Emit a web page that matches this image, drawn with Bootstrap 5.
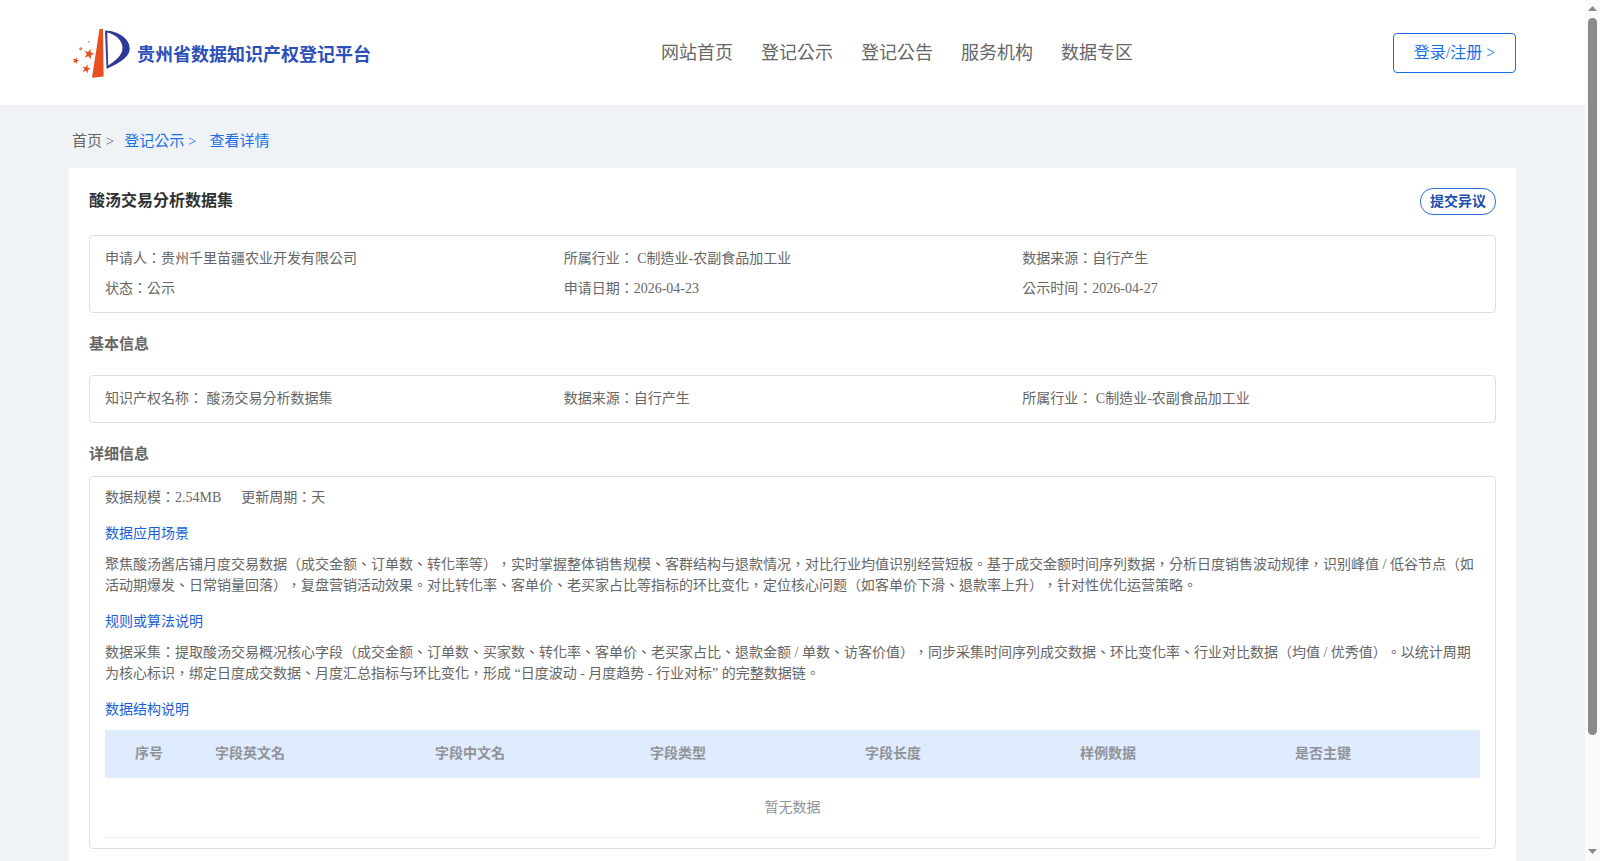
<!DOCTYPE html>
<html lang="zh-TW">
<head>
<meta charset="utf-8">
<link rel="stylesheet" href="https://cdn.jsdelivr.net/npm/bootstrap@5.3.0/dist/css/bootstrap.min.css">
<style>
html,body{background:#eff3f6;}
body{font-family:"Liberation Serif","Noto Sans CJK TC",serif;font-size:14px;color:#666;line-height:21px;text-spacing-trim:space-all;}
.page-scroll{flex:1 1 0;min-width:0;overflow-y:auto;}
.bar-rail{width:15px;flex:none;background:#fafafa;padding:6px 3px 7px;}
.bar-arrow{display:block;width:9px;height:5px;flex:none;}
.bar-thumb{display:block;height:717px;flex:none;margin-top:7px;background:#8a8a8a;border-radius:5px;}
.site-head{height:105px;background:#fff;padding:0 69px 0 72px;}
.brand-name{font-family:"Liberation Sans","Noto Sans CJK TC",sans-serif;font-size:18px;font-weight:700;color:#2c50ba;margin:6px 0 0 7px;}
.brand-logo{width:58px;height:50px;display:block;}
.main-nav{gap:28px;margin-left:290px;}
.main-nav a{font-size:18px;color:#666;text-decoration:none;line-height:24px;}
.login-btn{width:123px;height:40px;border:1px solid #1a6fe8;border-radius:4px;color:#1a6fe8;font-size:16px;background:#fff;margin-left:auto;}
.crumbs{height:63px;padding:10px 0 0 72px;font-size:15px;}
.crumbs a{color:#1a6fe8;text-decoration:none;}
.crumbs .sep{margin-right:10px;}
.crumbs .sep2{margin-right:13px;}
.sheet{margin:0 69px 0 69px;background:#fff;padding:7px 20px 140px;}
.sheet-title{font-size:16px;font-weight:700;color:#303133;line-height:32px;}
.head-row{height:51px;margin-bottom:9px;}
.objection{width:76px;height:27px;border:1px solid #2b6ed8;border-radius:13px;font-size:14px;font-weight:700;color:#1d4fb0;background:#fff;padding:0;margin-top:1px;}
.box{border:1px solid #dcdfe6;border-radius:4px;padding:8px 15px;}
.box .cell{width:458.67px;flex:none;line-height:30px;}
.sec-title{font-size:15px;font-weight:700;color:#666;line-height:21px;}
.sec-a{margin:21px 0 20px;}
.sec-b{margin:21px 0 11px;}
.detail{padding:10px 15px 10px;}
.size-gap{margin-left:20px;}
.sub{color:#1a5fd8;margin:15px 0 10px;}
.para{margin:0;}
.tbl{width:100%;table-layout:fixed;border-collapse:collapse;margin-top:10px;}
.tbl th{background:#dfecfd;height:48px;font-weight:700;color:#909399;padding:0 10px 1px;}
.tbl th:first-child{padding-left:30px;width:100px;}
.tbl th:nth-child(2){width:220px;}
.tbl th:nth-child(n+3):nth-child(-n+6){width:215px;}
.tbl td{height:59px;text-align:center;color:#909399;border-bottom:1px solid #ebeef5;}
</style>
</head>
<body class="d-flex vh-100 overflow-hidden">
<div class="page-scroll">
<header class="site-head d-flex align-items-center">
  <div class="d-flex align-items-center">
    <svg class="brand-logo" viewBox="0 0 58 50" aria-hidden="true">
      <defs><path id="st" d="M0-1L.235-.324.951-.309.38.124.588.809 0 .4-.588.809-.38.124-.951-.309-.235-.324Z"/></defs>
      <path d="M27.5 1L31 1L31.6 48.5L20 49.8Z" fill="#e8501f"/>
      <path fill-rule="evenodd" d="M33 2.5C47 3 58 11 57.7 21C57.4 30 45 36 34.6 41ZM35.2 4.5L36.2 37.5C42 33.5 50.5 28 50.5 20C50.5 12 43 6 35.2 4.5Z" fill="#2b3a97"/>
      <use href="#st" transform="translate(17 26) scale(5.5) rotate(15)" fill="#e8501f"/>
      <use href="#st" transform="translate(3.7 32.7) scale(3.6) rotate(15)" fill="#e8501f"/>
      <use href="#st" transform="translate(14.3 41) scale(4.6) rotate(15)" fill="#e8501f"/>
      <circle cx="8.7" cy="20.7" r="1.5" fill="#e8784f"/><circle cx="17" cy="13.7" r="1" fill="#eb9a80"/>
    </svg>
    <span class="brand-name">贵州省数据知识产权登记平台</span>
  </div>
  <nav class="main-nav d-flex">
    <a href="#">网站首页</a><a href="#">登记公示</a><a href="#">登记公告</a><a href="#">服务机构</a><a href="#">数据专区</a>
  </nav>
  <button class="login-btn" type="button">登录/注册 &gt;</button>
</header>
<div class="crumbs d-flex align-items-center">
  <span class="sep">首页 &gt;</span><a class="sep2" href="#">登记公示 &gt;</a><a href="#">查看详情</a>
</div>
<main class="sheet">
  <div class="head-row d-flex justify-content-between align-items-center">
    <div class="sheet-title">酸汤交易分析数据集</div>
    <button class="objection" type="button">提交异议</button>
  </div>
  <div class="box">
    <div class="d-flex"><div class="cell">申请人：贵州千里苗疆农业开发有限公司</div><div class="cell">所属行业： C制造业-农副食品加工业</div><div class="cell">数据来源：自行产生</div></div>
    <div class="d-flex"><div class="cell">状态：公示</div><div class="cell">申请日期：2026-04-23</div><div class="cell">公示时间：2026-04-27</div></div>
  </div>
  <div class="sec-title sec-a">基本信息</div>
  <div class="box">
    <div class="d-flex"><div class="cell">知识产权名称： 酸汤交易分析数据集</div><div class="cell">数据来源：自行产生</div><div class="cell">所属行业： C制造业-农副食品加工业</div></div>
  </div>
  <div class="sec-title sec-b">详细信息</div>
  <div class="box detail">
    <div>数据规模：2.54MB<span class="size-gap">更新周期：天</span></div>
    <div class="sub">数据应用场景</div>
    <p class="para">聚焦酸汤酱店铺月度交易数据（成交金额、订单数、转化率等），实时掌握整体销售规模、客群结构与退款情况，对比行业均值识别经营短板。基于成交金额时间序列数据，分析日度销售波动规律，识别峰值 / 低谷节点（如活动期爆发、日常销量回落），复盘营销活动效果。对比转化率、客单价、老买家占比等指标的环比变化，定位核心问题（如客单价下滑、退款率上升），针对性优化运营策略。</p>
    <div class="sub">规则或算法说明</div>
    <p class="para">数据采集：提取酸汤交易概况核心字段（成交金额、订单数、买家数、转化率、客单价、老买家占比、退款金额 / 单数、访客价值），同步采集时间序列成交数据、环比变化率、行业对比数据（均值 / 优秀值）。以统计周期为核心标识，绑定日度成交数据、月度汇总指标与环比变化，形成 “日度波动 - 月度趋势 - 行业对标” 的完整数据链。</p>
    <div class="sub">数据结构说明</div>
    <table class="tbl">
      <thead><tr><th>序号</th><th>字段英文名</th><th>字段中文名</th><th>字段类型</th><th>字段长度</th><th>样例数据</th><th>是否主键</th></tr></thead>
      <tbody><tr><td colspan="7">暂无数据</td></tr></tbody>
    </table>
  </div>
</main>
</div>
<div class="bar-rail d-flex flex-column" aria-hidden="true">
  <svg class="bar-arrow" viewBox="0 0 9 5"><path d="M4.5 0L9 5H0Z" fill="#8a8a8a"/></svg>
  <span class="bar-thumb"></span>
  <svg class="bar-arrow mt-auto" viewBox="0 0 9 5"><path d="M0 0H9L4.5 5Z" fill="#8a8a8a"/></svg>
</div>
<script src="https://cdn.jsdelivr.net/npm/bootstrap@5.3.0/dist/js/bootstrap.bundle.min.js"></script>
</body>
</html>
